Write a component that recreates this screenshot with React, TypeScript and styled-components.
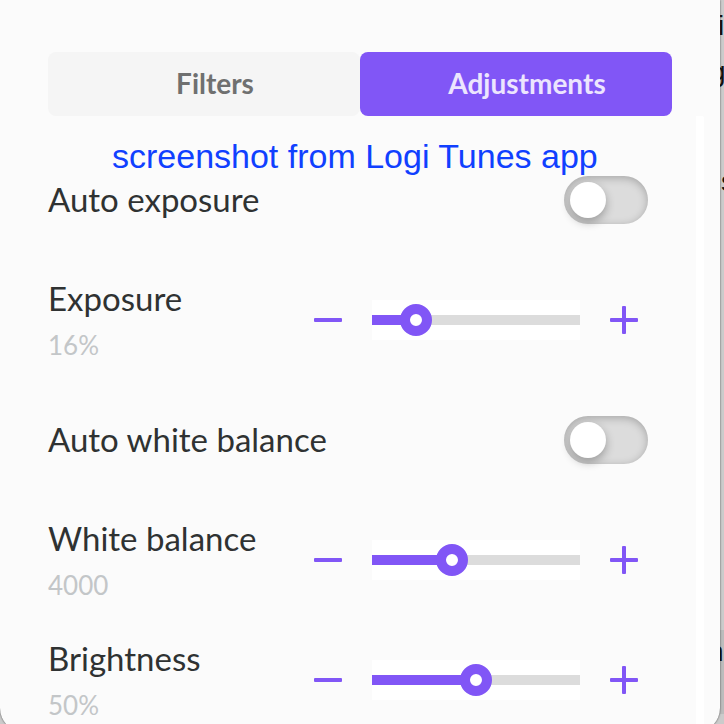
import React, { useState } from "react";
import styled, { createGlobalStyle } from "styled-components";

const GlobalStyle = createGlobalStyle`
  * {
    box-sizing: border-box;
  }
  body {
    margin: 0;
    font-family: Lato, "Open Sans", sans-serif;
    color: #2f3232;
  }
`;

const Desktop = styled.div`
  position: relative;
  height: 100vh;
  padding-right: 4px;
  overflow: hidden;
  background: #cbcbcb;
`;

const Behind = styled.div`
  position: absolute;
  top: 0;
  right: 0;
  bottom: 0;
  width: 24px;
  overflow: hidden;
  font-family: "Liberation Sans", sans-serif;
  font-size: 28px;
  line-height: 32px;
  color: #111;
`;

const BehindBand = styled.div`
  position: absolute;
  top: 630px;
  width: 100%;
  height: 84px;
  background: #bcbcbc;
`;

const BehindText = styled.span<{ $top: number; $left: number }>`
  position: absolute;
  top: ${(p) => p.$top}px;
  left: ${(p) => p.$left}px;
`;

const Panel = styled.main`
  position: relative;
  display: flex;
  flex-direction: column;
  height: calc(100vh + 8px);
  padding-top: 52px;
  overflow: hidden;
  background: #fbfbfb;
  border-radius: 0 0 24px 24px;
  box-shadow: 0 0 2px rgba(0, 0, 0, 0.7);
`;

const Tabs = styled.div`
  display: flex;
  flex: none;
  margin: 0 48px;
`;

const Tab = styled.button<{ $active?: boolean }>`
  flex: 1;
  height: 64px;
  padding: 0 0 2px 22px;
  border: 0;
  border-radius: 8px;
  font: bold 28px/32px Lato, "Open Sans", sans-serif;
  color: ${(p) => (p.$active ? "#ece5fe" : "#6f7070")};
  background: ${(p) => (p.$active ? "#8156f6" : "#f5f5f5")};
`;

const Note = styled.p`
  position: absolute;
  top: 136px;
  left: 112px;
  margin: 0;
  font: 34px/40px "Liberation Sans", Arial, sans-serif;
  color: #1040ff;
  white-space: nowrap;
`;

const Scroller = styled.div`
  flex: 1;
  min-height: 0;
  margin-right: 16px;
  padding: 24px 48px 0 48px;
  overflow: hidden;
  border-right: 8px solid #fff;
  border-top-right-radius: 2px;
`;

const Row = styled.div`
  display: flex;
  align-items: center;
  justify-content: space-between;
  height: 120px;
`;

const Label = styled.label`
  display: block;
  padding-bottom: 2px;
  font-size: 33px;
  line-height: 40px;
`;

const Value = styled.output`
  display: block;
  margin-top: 8px;
  font-size: 26px;
  line-height: 34px;
  color: #c3c6c8;
`;

const Controls = styled.div`
  display: flex;
  align-items: center;
  gap: 20px;
`;

const StepButton = styled.button`
  display: flex;
  align-items: center;
  justify-content: center;
  width: 48px;
  height: 48px;
  padding: 0;
  border: 0;
  background: none;
  color: #8156f6;
`;

const Switch = styled.input`
  appearance: none;
  width: 84px;
  height: 48px;
  margin: 0;
  padding: 6px;
  border-radius: 24px;
  background: #dcdcdc;
  box-shadow: inset 0 2px 8px rgba(0, 0, 0, 0.25);

  &::before {
    content: "";
    display: block;
    width: 36px;
    height: 36px;
    border-radius: 50%;
    background: #fff;
    box-shadow: 0 4px 10px rgba(0, 0, 0, 0.3);
  }

  &:checked {
    background: #8156f6;
  }

  &:checked::before {
    margin-left: 36px;
  }
`;

const Range = styled.input`
  appearance: none;
  width: 208px;
  height: 40px;
  margin: 0;
  background: #fff;

  &::-webkit-slider-runnable-track {
    height: 10px;
    background: linear-gradient(
      to right,
      #8156f6 var(--fill),
      #dcdcdc var(--fill)
    );
  }

  &::-webkit-slider-thumb {
    appearance: none;
    width: 32px;
    height: 32px;
    margin-top: -11px;
    border: 10px solid #8156f6;
    border-radius: 50%;
    background: #fff;
  }
`;

const MinusIcon = () => (
  <svg width="28" height="28" viewBox="0 0 28 28" aria-hidden="true">
    <rect y="12" width="28" height="4" rx="1" fill="currentColor" />
  </svg>
);

const PlusIcon = () => (
  <svg width="28" height="28" viewBox="0 0 28 28" aria-hidden="true">
    <rect y="12" width="28" height="4" rx="1" fill="currentColor" />
    <rect x="12" width="4" height="28" rx="1" fill="currentColor" />
  </svg>
);

const ToggleRow = ({ id, label }: { id: string; label: string }) => (
  <Row>
    <Label htmlFor={id}>{label}</Label>
    <Switch type="checkbox" role="switch" id={id} />
  </Row>
);

type SliderRowProps = {
  id: string;
  label: string;
  initial: number;
  min?: number;
  max?: number;
  step?: number;
  unit?: string;
};

const SliderRow = ({
  id,
  label,
  initial,
  min = 0,
  max = 100,
  step = 1,
  unit = "",
}: SliderRowProps) => {
  const [value, setValue] = useState(initial);
  const change = (n: number) => setValue(Math.min(max, Math.max(min, n)));
  const ratio = (value - min) / (max - min);
  const fill = { "--fill": `${16 + ratio * 176}px` } as React.CSSProperties;

  return (
    <Row>
      <div>
        <Label htmlFor={id}>{label}</Label>
        <Value htmlFor={id}>
          {value}
          {unit}
        </Value>
      </div>
      <Controls>
        <StepButton aria-label={`Decrease ${label}`} onClick={() => change(value - step)}>
          <MinusIcon />
        </StepButton>
        <Range
          type="range"
          id={id}
          min={min}
          max={max}
          step={step}
          value={value}
          style={fill}
          onChange={(e) => change(Number(e.target.value))}
        />
        <StepButton aria-label={`Increase ${label}`} onClick={() => change(value + step)}>
          <PlusIcon />
        </StepButton>
      </Controls>
    </Row>
  );
};

const App = () => (
  <>
    <GlobalStyle />
    <Desktop>
      <Behind aria-hidden="true">
        <BehindBand />
        <BehindText $top={10} $left={18}>i</BehindText>
        <BehindText $top={56} $left={10}>g</BehindText>
        <BehindText $top={166} $left={21}>s</BehindText>
        <BehindText $top={636} $left={8}>n</BehindText>
      </Behind>
      <Panel>
        <Tabs>
          <Tab>Filters</Tab>
          <Tab $active>Adjustments</Tab>
        </Tabs>
        <Scroller>
          <ToggleRow id="auto-exposure" label="Auto exposure" />
          <SliderRow id="exposure" label="Exposure" initial={16} unit="%" />
          <ToggleRow id="auto-white-balance" label="Auto white balance" />
          <SliderRow
            id="white-balance"
            label="White balance"
            initial={4000}
            min={2000}
            max={7500}
            step={100}
          />
          <SliderRow id="brightness" label="Brightness" initial={50} unit="%" />
        </Scroller>
        <Note>screenshot from Logi Tunes app</Note>
      </Panel>
    </Desktop>
  </>
);

export default App;
